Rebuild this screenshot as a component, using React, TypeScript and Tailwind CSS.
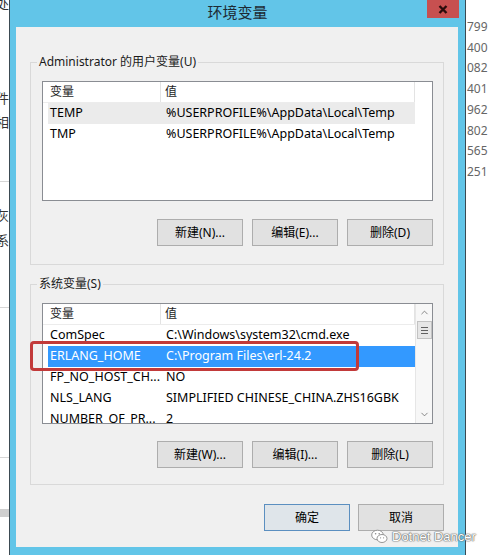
import { ChevronDown, ChevronUp } from "lucide-react";

const ui = "font-['Noto_Sans','Noto_Sans_CJK_SC',sans-serif]";

type Row = { name: string; value: string; state?: "selected" | "focused" };

const userRows: Row[] = [
  { name: "TEMP", value: "%USERPROFILE%\\AppData\\Local\\Temp", state: "focused" },
  { name: "TMP", value: "%USERPROFILE%\\AppData\\Local\\Temp" },
];

const sysRows: Row[] = [
  { name: "ComSpec", value: "C:\\Windows\\system32\\cmd.exe" },
  { name: "ERLANG_HOME", value: "C:\\Program Files\\erl-24.2", state: "selected" },
  { name: "FP_NO_HOST_CH...", value: "NO" },
  { name: "NLS_LANG", value: "SIMPLIFIED CHINESE_CHINA.ZHS16GBK" },
  { name: "NUMBER_OF_PR...", value: "2" },
];

const Btn = ({ label, primary }: { label: string; primary?: boolean }) => (
  <div
    className={`h-[27px] w-[86px] flex items-center justify-center text-[12px] text-black border ${
      primary ? "border-[#5b8fc0] bg-[#dfe5ea]" : "border-[#adadad] bg-[#e1e1e1]"
    }`}
  >
    {label}
  </div>
);

const ListView = ({ rows, scroll, height }: { rows: Row[]; scroll?: boolean; height: string }) => (
  <div className={`ml-[11px] mr-[10px] ${height} border border-[#8a8d93] bg-white flex overflow-hidden`}>
    <div className="flex-1 flex flex-col">
      <div className="h-[21px] shrink-0 flex text-[12px] text-[#1e1e1e] border-b border-[#ececec] w-[372px]">
        <div className="w-[118px] pl-[7px] flex items-center border-r border-[#e3e3e3]">变量</div>
        <div className="w-[254px] pl-[4px] flex items-center border-r border-[#e3e3e3]">值</div>
      </div>
      {rows.map((r) => (
        <div
          key={r.name}
          className={`h-[21px] shrink-0 ml-[5px] w-[367px] flex items-center text-[12.5px] whitespace-nowrap ${
            r.state === "selected"
              ? "bg-[#3399ff] text-white"
              : r.state === "focused"
              ? "bg-[#ebebeb] text-black"
              : "text-black"
          }`}
        >
          <div className="w-[113px] pl-[2px] overflow-hidden">{r.name}</div>
          <div className="pl-[5px]">{r.value}</div>
        </div>
      ))}
    </div>
    {scroll && (
      <div className="w-[17px] shrink-0 bg-[#f7f7f7] border-l border-[#e6e6e6] flex flex-col items-center">
        <div className="h-[17px] flex items-center justify-center text-[#606060]">
          <ChevronUp size={11} strokeWidth={1.6} />
        </div>
        <div className="h-[18px] w-[15px] bg-[#e6e6e6] border border-[#c2c2c2] flex flex-col items-center justify-center gap-[2px]">
          <div className="w-[7px] h-px bg-[#606060]" />
          <div className="w-[7px] h-px bg-[#606060]" />
          <div className="w-[7px] h-px bg-[#606060]" />
        </div>
        <div className="flex-1" />
        <div className="h-[17px] flex items-center justify-center text-[#606060]">
          <ChevronDown size={11} strokeWidth={1.6} />
        </div>
      </div>
    )}
  </div>
);

const Group = ({
  label,
  rows,
  scroll,
  buttons,
  groupH,
  listH,
  btnGap,
}: {
  label: string;
  rows: Row[];
  scroll?: boolean;
  buttons: string[];
  groupH: string;
  listH: string;
  btnGap: string;
}) => (
  <div className={`mx-[14px] ${groupH} border border-[#d9d9d9] flex flex-col`}>
    <div className="ml-[6px] -mt-[10px] w-fit px-[2px] bg-[#f0f0f0] text-[12px] leading-[17px] text-[#1a1a1a]">
      {label}
    </div>
    <div className="h-[11px]" />
    <ListView rows={rows} scroll={scroll} height={listH} />
    <div className={`${btnGap} mr-[10px] flex justify-end gap-[9px]`}>
      {buttons.map((b) => (
        <Btn key={b} label={b} />
      ))}
    </div>
  </div>
);

const WeChat = () => (
  <svg width="17" height="15" viewBox="0 0 17 15">
    <ellipse cx="6.5" cy="6" rx="5.8" ry="4.8" fill="#fff" stroke="#8a8a8a" strokeWidth="0.9" />
    <ellipse cx="11" cy="9.5" rx="5" ry="4" fill="#fff" stroke="#8a8a8a" strokeWidth="0.9" />
    <circle cx="4.6" cy="4.8" r="0.8" fill="#8a8a8a" />
    <circle cx="8.2" cy="4.8" r="0.8" fill="#8a8a8a" />
    <circle cx="9.6" cy="8.8" r="0.6" fill="#8a8a8a" />
    <circle cx="12.6" cy="8.8" r="0.6" fill="#8a8a8a" />
  </svg>
);

const numbers = ["799", "400", "082", "401", "962", "802", "565", "251"];

export default function App() {
  return (
    <div className={`${ui} relative w-[489px] h-[555px] bg-white flex overflow-hidden`}>
      {/* background window, left edge */}
      <div className="w-[9px] shrink-0 flex flex-col text-[13px] text-[#333] overflow-hidden">
        <div className="h-[12px] -mt-[3px] flex justify-end whitespace-nowrap leading-[14px]">处</div>
        <div className="h-[79px]" />
        <div className="h-[22px] flex justify-end items-center whitespace-nowrap">件</div>
        <div className="h-[25px] flex justify-end items-center whitespace-nowrap">相</div>
        <div className="h-[47px] border-b border-[#d6d6d6]" />
        <div className="h-[22px]" />
        <div className="h-[24px] flex justify-end items-center whitespace-nowrap">灰</div>
        <div className="h-[26px] flex justify-end items-center whitespace-nowrap">系</div>
        <div className="h-[54px] border-b border-[#d6d6d6]" />
        <div className="h-[150px] border-b border-[#d6d6d6]" />
        <div className="h-[51px]" />
        <div className="h-[8px] bg-[#cfcfcf]" />
      </div>

      {/* dialog */}
      <div className="w-[457px] shrink-0 h-full flex flex-col border-x border-[#3b4a52] bg-[#62c5e8]">
        <div className="relative h-[27px] shrink-0 flex items-center justify-center">
          <span className="text-[15px] text-[#1d2a33] leading-none -mt-[2px]">环境变量</span>
          <div className="absolute right-[6px] top-0 w-[32px] h-[18px] bg-[#c75050] flex items-center justify-center">
            <svg width="10" height="9" viewBox="0 0 10 9">
              <path d="M1.5 1 L8.5 8 M8.5 1 L1.5 8" stroke="#2a0c0c" strokeWidth="2.4" />
            </svg>
          </div>
        </div>
        <div className="flex-1 ml-[6px] mr-[7px] bg-[#f0f0f0] flex flex-col">
          <div className="h-[35px] shrink-0" />
          <Group
            label="Administrator 的用户变量(U)"
            rows={userRows}
            buttons={["新建(N)...", "编辑(E)...", "删除(D)"]}
            groupH="h-[203px]"
            listH="h-[120px]"
            btnGap="mt-[18px]"
          />
          <div className="h-[19px] shrink-0" />
          <Group
            label="系统变量(S)"
            rows={sysRows}
            scroll
            buttons={["新建(W)...", "编辑(I)...", "删除(L)"]}
            groupH="h-[201px]"
            listH="h-[121px]"
            btnGap="mt-[17px]"
          />
          <div className="mt-[19px] mr-[14px] flex justify-end gap-[8px]">
            <Btn label="确定" primary />
            <Btn label="取消" />
          </div>
        </div>
        <div className="h-[8px] shrink-0" />
      </div>

      {/* background window, right edge */}
      <div className="flex-1 pl-[1px] pt-[17px] flex flex-col text-[12px] leading-[20.7px] text-[#666] whitespace-nowrap">
        {numbers.map((n) => (
          <div key={n}>{n}</div>
        ))}
      </div>

      {/* annotation */}
      <div className="absolute left-[30px] top-[341px] w-[329px] h-[30px] border-[3px] border-[#c23a3a] rounded-[4px]" />

      {/* watermark */}
      <div className="absolute left-[371px] top-[527px] flex items-center gap-[4px]">
        <WeChat />
        <span className="font-['Liberation_Sans',sans-serif] text-[13px] text-white [text-shadow:0_0_1px_#555,0_0_1px_#555,0_0_2px_#888]">
          Dotnet Dancer
        </span>
      </div>
    </div>
  );
}
